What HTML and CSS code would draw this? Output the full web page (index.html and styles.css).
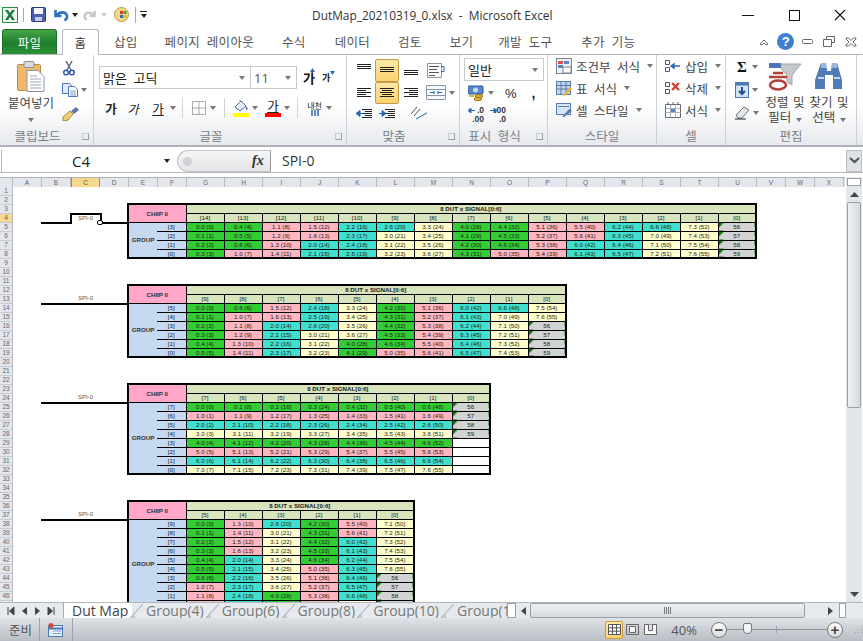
FILE: index.html
```html
<!DOCTYPE html>
<html lang="ko">
<head>
    <meta charset="UTF-8">
    <meta name="viewport" content="width=device-width, initial-scale=1.0">
    <title>DutMap_20210319_0.xlsx - Microsoft Excel</title>
    <link rel="stylesheet" href="styles.css">
</head>
<body>
<div class="app">

    <header class="titlebar">
        <div class="qat">
            <svg class="x-logo" width="16" height="16" viewBox="0 0 16 16"><rect x="0.5" y="0.5" width="15" height="15" fill="#eef6ee" stroke="#2c8a4a"/><path d="M3 3h3l2 3 2-3h3l-3.500 5 3.500 5h-3l-2-3-2 3H3l3.500-5z" fill="#1f7a3d"/></svg>
            <i class="qat-sep"></i>
            <svg class="q-save" width="15" height="15" viewBox="0 0 15 15"><rect x="0.500" y="0.500" width="14" height="14" rx="1" fill="#4a5fb0" stroke="#2b3a80"/><rect x="3" y="1" width="9" height="6" fill="#f4f6fb"/><rect x="4" y="10" width="7" height="4" fill="#c9cfdf"/></svg>
            <svg class="q-undo" width="16" height="14" viewBox="0 0 16 14"><path d="M1.500 2v6h6M2.500 7.500C5 3.500 12 3 13 8c.4 2-1 3.500-2.500 4.500" fill="none" stroke="#2f74c0" stroke-width="2.600"/></svg>
            <span class="dd dark q-dd1"></span>
            <svg class="q-redo" width="14" height="14" viewBox="0 0 16 14"><path d="M14.500 2v6h-6M13.500 7.500C11 3.500 4 3 3 8c-.4 2 1 3.500 2.500 4.500" fill="none" stroke="#c3c7cc" stroke-width="2.600"/></svg>
            <span class="dd light q-dd2"></span>
            <svg class="q-palette" width="15" height="15" viewBox="0 0 15 15"><circle cx="7.500" cy="7.500" r="7" fill="#f3d982" stroke="#b89a4a"/><rect x="6" y="4" width="3" height="3" fill="#d9382c"/><rect x="9.500" y="4" width="3" height="3" fill="#3d9c3d"/><rect x="6" y="8" width="3" height="3" fill="#3468c0"/><rect x="9.500" y="8" width="3" height="3" fill="#e8b020"/></svg>
            <i class="qat-sep tall"></i>
            <span class="q-custom"><i></i><span class="dd dark"></span></span>
        </div>
        <div class="doc-title">DutMap_20210319_0.xlsx&nbsp; -&nbsp; Microsoft Excel</div>
        <div class="win-btns">
            <svg width="12" height="12" viewBox="0 0 12 12"><path d="M0 6.500h12" stroke="#111"/></svg>
            <svg width="12" height="12" viewBox="0 0 12 12"><rect x="1.500" y="1.500" width="10" height="10" fill="none" stroke="#111"/></svg>
            <svg width="12" height="12" viewBox="0 0 12 12"><path d="M1 1l10 10M11 1L1 11" stroke="#111" stroke-width="1.100"/></svg>
        </div>
    </header>

    <nav class="tabs">
        <a class="tab-file">파일</a>
        <a class="tab-home">홈</a>
        <a class="t-insert">삽입</a>
        <a class="t-page">페이지 레이아웃</a>
        <a class="t-formula">수식</a>
        <a class="t-data">데이터</a>
        <a class="t-review">검토</a>
        <a class="t-view">보기</a>
        <a class="t-dev">개발 도구</a>
        <a class="t-addin">추가 기능</a>
        <div class="help-btns">
            <svg width="10" height="8" viewBox="0 0 10 8"><path d="M1 6l4-4 4 4-2 1-2-2-2 2z" fill="#fff" stroke="#666"/></svg>
            <span class="help">?</span>
            <svg width="11" height="6" viewBox="0 0 11 6"><rect x="0.500" y="0.500" width="10" height="4" rx="1" fill="#fff" stroke="#666"/></svg>
            <svg width="12" height="11" viewBox="0 0 12 11"><path d="M3.500 3V.5h8v6H9M.5 3.500h8v7h-8z" fill="#fff" stroke="#666"/></svg>
            <svg width="12" height="10" viewBox="0 0 12 10"><path d="M1 1h2.500L6 3.500 8.500 1H11v1L8 5l3 3v1H8.500L6 6.500 3.500 9H1V8l3-3-3-3z" fill="#fff" stroke="#666"/></svg>
        </div>
    </nav>

    <section class="ribbon">

        <div class="group g-clip">
            <div class="group-body clip-body">
                <div class="paste">
                    <svg width="28" height="31" viewBox="0 0 28 31"><rect x="0.500" y="3.500" width="23" height="26" rx="1.500" fill="#eeb96c" stroke="#b98a46"/><rect x="7" y="0.500" width="10" height="6" rx="1" fill="#d8dade" stroke="#8d8f94"/><path d="M10 9.500h11l6 6v15H10z" fill="#fff" stroke="#8c96a6"/><path d="M13 15h7M13 18h11M13 21h11M13 24h11M13 27h11" stroke="#9aa6b6"/></svg>
                    <span class="paste-label">붙여넣기</span>
                    <span class="dd"></span>
                </div>
                <div class="clip-tools">
                    <svg class="i-cut" width="12" height="15" viewBox="0 0 12 15"><path d="M3 0l5 9M9 0L4 9" stroke="#5a6a80" stroke-width="1.500"/><circle cx="3" cy="11.500" r="2.300" fill="none" stroke="#2a5aa8" stroke-width="1.500"/><circle cx="9" cy="11.500" r="2.300" fill="none" stroke="#2a5aa8" stroke-width="1.500"/></svg>
                    <span class="i-copy"><svg width="16" height="14" viewBox="0 0 16 14"><path d="M.5.5h7l2 2v8H.5z" fill="#e2ecf8" stroke="#4a78b8"/><path d="M6.500 3.500h6l3 3v7h-9z" fill="#fff" stroke="#4a78b8"/><path d="M8 8h6M8 10h6M8 12h6" stroke="#7a9ccc"/></svg><span class="dd"></span></span>
                    <svg class="i-brush" width="17" height="14" viewBox="0 0 17 14"><path d="M1 10l7-6 3 3-5 6-5 1z" fill="#f0d070" stroke="#a88a3a"/><path d="M9 4l5-4 3 3-5 4z" fill="#5a7ab0"/></svg>
                </div>
            </div>
            <div class="group-label launched">클립보드<i class="launch"></i></div>
        </div>

        <div class="group g-font">
            <div class="group-body">
                <div class="font-row1">
                    <div class="combo c-font"><span>맑은 고딕</span><span class="dd"></span></div>
                    <div class="combo c-size"><span class="size-val">11</span><span class="dd"></span></div>
                    <span class="grow">가<svg width="5" height="4" viewBox="0 0 5 4"><path d="M0 4l2.500-4L5 4z" fill="#2a66b8"/></svg></span>
                    <span class="shrink">가<svg width="5" height="4" viewBox="0 0 5 4"><path d="M0 0l2.500 4L5 0z" fill="#2a66b8"/></svg></span>
                </div>
                <div class="font-row2">
                    <span class="fmt f-b">가</span>
                    <span class="fmt f-i">가</span>
                    <span class="fmt f-u">가</span>
                    <span class="dd d1"></span>
                    <i class="vsep s1"></i>
                    <svg class="i-border" width="14" height="14" viewBox="0 0 14 14"><path d="M.5.5h13v13H.5zM7 .5v13M.5 7h13" fill="none" stroke="#666" stroke-dasharray="1 1"/></svg>
                    <span class="dd d2"></span>
                    <i class="vsep s2"></i>
                    <span class="i-fill"><svg width="16" height="12" viewBox="0 0 16 12"><path d="M2 7l6-6 5 5-6 5z" fill="#e8eef8" stroke="#4c6ea8"/><path d="M13 6c2 2 2 4 1 4s-2-2-1-4z" fill="#4c6ea8"/><path d="M7 1V0" stroke="#4c6ea8"/></svg><b class="bar yellow"></b></span>
                    <span class="dd d3"></span>
                    <span class="i-color">가<b class="bar red"></b></span>
                    <span class="dd d3"></span>
                    <i class="vsep s3"></i>
                    <span class="i-phon">내천<svg width="12" height="6" viewBox="0 0 12 6"><path d="M3 0v6M6 0v6M9 0v6" stroke="#2a66b8" stroke-width="1.500"/></svg></span>
                    <span class="dd d4"></span>
                </div>
            </div>
            <div class="group-label launched">글꼴<i class="launch"></i></div>
        </div>

        <div class="group g-align">
            <div class="group-body align-grid">
                <span class="atool"><svg class="lines" width="14" height="14" viewBox="0 0 14 14"><path d="M0 1.500h14M0 3.500h14M0 5.500h14"/></svg></span>
                <span class="atool on"><svg class="lines" width="14" height="14" viewBox="0 0 14 14"><path d="M0 4.500h14M0 6.500h14M0 8.500h14"/></svg></span>
                <span class="atool"><svg class="lines" width="14" height="14" viewBox="0 0 14 14"><path d="M0 7.500h14M0 9.500h14M0 11.500h14"/></svg></span>
                <span class="awide"><svg width="20" height="15" viewBox="0 0 20 15"><path d="M1.500.5h14v14h-14z" fill="#fff" stroke="#8a97a8"/><path d="M3 3.500h10M3 6.500h8M3 9.500h10M3 12.500h6" stroke="#555"/><path d="M15 3.500h3v5h-3" fill="none" stroke="#2a66b8"/></svg></span>
                <span class="atool"><svg class="lines" width="14" height="14" viewBox="0 0 14 14"><path d="M0 2.500h14M0 4.500h9M0 6.500h14M0 8.500h9M0 10.500h14"/></svg></span>
                <span class="atool on"><svg class="lines" width="14" height="14" viewBox="0 0 14 14"><path d="M0 2.500h14M2 4.500h10M0 6.500h14M2 8.500h10M0 10.500h14"/></svg></span>
                <span class="atool"><svg class="lines" width="14" height="14" viewBox="0 0 14 14"><path d="M0 2.500h14M5 4.500h9M0 6.500h14M5 8.500h9M0 10.500h14"/></svg></span>
                <span class="awide"><svg width="20" height="15" viewBox="0 0 20 15"><path d="M.5.5h19v14H.5z" fill="#f4f7fb" stroke="#8a97a8"/><path d="M.5 4.500h19M.5 10.500h19" stroke="#8a97a8"/><path d="M4 7.500h4M12 7.500h4M8 6v3M12 6v3" stroke="#2a66b8"/></svg><span class="dd"></span></span>
                <span class="atool"><svg class="lines" width="16" height="14" viewBox="0 0 16 14"><path d="M6 1.500h10M9 3.500h7M6 5.500h10M9 7.500h7M6 9.500h10"/><path class="blue" d="M0 5.500l4-3v6zM3 5.500h4"/></svg></span>
                <span class="atool"><svg class="lines" width="16" height="14" viewBox="0 0 16 14"><path d="M6 1.500h10M9 3.500h7M6 5.500h10M9 7.500h7M6 9.500h10"/><path class="blue" d="M7 5.500l-4-3v6zM0 5.500h4"/></svg></span>
                <span class="aorient"><svg width="18" height="16" viewBox="0 0 18 16"><path d="M1 9l6-7M4 11l6-7" stroke="#555"/><path d="M6 14l11-6" stroke="#2a66b8"/></svg></span>
            </div>
            <div class="group-label launched">맞춤<i class="launch"></i></div>
        </div>

        <div class="group g-num">
            <div class="group-body">
                <div class="combo c-num"><span>일반</span><span class="dd"></span></div>
                <div class="num-row">
                    <svg class="i-money" width="16" height="16" viewBox="0 0 16 16"><rect x="0" y="1" width="15" height="8" rx="1" fill="#5a86c8" stroke="#2c5a9c"/><circle cx="7.500" cy="5" r="2.500" fill="#c8d8f0"/><ellipse cx="11" cy="11" rx="4" ry="1.500" fill="#e8b830" stroke="#9a7418"/><ellipse cx="10" cy="14" rx="4" ry="1.500" fill="#e8b830" stroke="#9a7418"/><path d="M1 11h5" stroke="#e8b830" stroke-width="2"/></svg>
                    <span class="dd"></span>
                    <span class="pct">%</span>
                    <span class="comma">,</span>
                </div>
                <div class="dec-row">
                    <span class="dec">.0<br>.00<svg width="7" height="5" viewBox="0 0 7 5"><path d="M0 2.500L3 0v5zM3 2.500h4" fill="#2a66b8" stroke="#2a66b8"/></svg></span>
                    <span class="dec">.00<br>.0<svg width="7" height="5" viewBox="0 0 7 5"><path d="M7 2.500L4 0v5zM0 2.500h4" fill="#2a66b8" stroke="#2a66b8"/></svg></span>
                </div>
            </div>
            <div class="group-label launched">표시 형식<i class="launch"></i></div>
        </div>

        <div class="group g-style">
            <div class="group-body stack">
                <div class="cmd"><svg width="16" height="16" viewBox="0 0 16 16"><rect x="0.500" y="0.500" width="15" height="15" fill="#eef1f6" stroke="#7a8696"/><path d="M2 3h5v3H2z" fill="#d9534a"/><path d="M8 3h5v3H8z" fill="#5a86c8"/><path d="M2 7h5v3H2z" fill="#5a86c8"/><rect x="7" y="9" width="8" height="6" fill="#fff" stroke="#7a8696"/></svg><span>조건부 서식</span><span class="dd"></span></div>
                <div class="cmd"><svg width="16" height="16" viewBox="0 0 16 16"><rect x="0.500" y="1.500" width="14" height="13" fill="#c4d4ec" stroke="#5a7ab0"/><path d="M.5 5.500h14M.5 9h14M5 1.500v13M10 1.500v13" stroke="#5a7ab0"/><path d="M7 15l7-8 2 2-7 7z" fill="#e8b830"/></svg><span>표 서식</span><span class="dd"></span></div>
                <div class="cmd"><svg width="16" height="16" viewBox="0 0 16 16"><rect x="0.500" y="1.500" width="14" height="11" fill="#d8e4f4" stroke="#5a7ab0"/><path d="M2 4.500h11" stroke="#5a7ab0"/><path d="M6 15l7-8 3 2-8 6z" fill="#5a7ab0"/></svg><span>셀 스타일</span><span class="dd"></span></div>
            </div>
            <div class="group-label">스타일</div>
        </div>

        <div class="group g-cells">
            <div class="group-body stack">
                <div class="cmd"><svg width="16" height="16" viewBox="0 0 16 16"><path d="M.5 2.500h4v4h-4zM.5 9.500h4v4h-4z" fill="#fff" stroke="#556"/><path d="M6 8l3-2v4zM9 8h6" fill="#2a66b8" stroke="#2a66b8" stroke-width="1.500"/></svg><span>삽입</span><span class="dd"></span></div>
                <div class="cmd"><svg width="16" height="16" viewBox="0 0 16 16"><path d="M.5 2.500h4v4h-4zM.5 9.500h4v4h-4z" fill="#fff" stroke="#556"/><path d="M7 3l7 7M14 3l-7 7" stroke="#d9382c" stroke-width="2.200"/></svg><span>삭제</span><span class="dd"></span></div>
                <div class="cmd"><svg width="16" height="16" viewBox="0 0 16 16"><path d="M.5 2.500h15v13H.5z" fill="#fff" stroke="#667"/><path d="M.5 6.500h15M.5 10.500h15M5.500 2.500v13M10.500 2.500v13" stroke="#a8b4c4"/><rect x="6" y="7" width="4" height="3" fill="#5a86c8"/><path d="M3 0v3M8 0v3M13 0v3" stroke="#667"/></svg><span>서식</span><span class="dd"></span></div>
            </div>
            <div class="group-label">셀</div>
        </div>

        <div class="group g-edit">
            <div class="group-body edit-body">
                <div class="edit-small">
                    <div class="etool"><span class="sigma">Σ</span><span class="dd"></span></div>
                    <div class="etool"><svg width="14" height="16" viewBox="0 0 14 16"><rect x="0.500" y="0.500" width="13" height="15" fill="#d4e2f4" stroke="#4a78b8"/><path d="M.5.5h13v3H.5z" fill="#4a78b8"/><path d="M7 5v6M4 9l3 3 3-3" fill="none" stroke="#1f4f98" stroke-width="2"/></svg><span class="dd"></span></div>
                    <div class="etool"><svg width="15" height="14" viewBox="0 0 15 14"><path d="M1 9l8-8 5 3-7 8H3z" fill="#e4e6ea" stroke="#70767e"/><path d="M0 13h11" stroke="#222"/></svg><span class="dd"></span></div>
                </div>
                <div class="big-cmd b-sort">
                    <svg width="34" height="31" viewBox="0 0 34 31"><path d="M9 3h24l-9 11v10l-5-3v-7z" fill="#c4c7cc" stroke="#a0a4aa"/><path d="M1 2h12v5H1z" fill="#4a78b8"/><path d="M1 16h18M5 12h10" stroke="#b04038" stroke-width="2.500"/><ellipse cx="10" cy="24" rx="8" ry="4.500" fill="none" stroke="#b04038" stroke-width="2.500"/></svg>
                    <span>정렬 및</span>
                    <span>필터 <span class="dd"></span></span>
                </div>
                <div class="big-cmd b-find">
                    <svg width="28" height="31" viewBox="0 0 28 31"><path d="M6 2h5l1 8h4l1-8h5l5 17v9H18V14h-8v14H0v-9z" fill="#4f7cb8"/><path d="M3 17h6M19 17h6" stroke="#c8d8f0" stroke-width="2"/><rect x="6" y="2" width="5" height="5" fill="#9ab8dc"/><rect x="17" y="2" width="5" height="5" fill="#9ab8dc"/></svg>
                    <span>찾기 및</span>
                    <span>선택 <span class="dd"></span></span>
                </div>
            </div>
            <div class="group-label">편집</div>
        </div>
    </section>

    <div class="formula">
        <div class="namebox"><span class="name-val">C4</span><span class="dd dark"></span></div>
        <div class="fx-wrap"><i class="fx-dot"></i><span class="fx">fx</span></div>
        <div class="formula-text">SPI-0</div>
        <div class="expand"><svg width="11" height="8" viewBox="0 0 11 8"><path d="M1 1l4.500 4L10 1" fill="none" stroke="#555" stroke-width="2.200"/></svg></div>
    </div>
    <div class="formula-gap"></div>

    <div class="sheet">
        <div class="sheet-main">
            <div class="colheads">
                <i class="corner"></i>
                <span class="ch">A</span><span class="ch">B</span><span class="ch cur">C</span><span class="ch">D</span><span class="ch">E</span><span class="ch">F</span>
                <span class="ch w">G</span><span class="ch w">H</span><span class="ch w">I</span><span class="ch w">J</span><span class="ch w">K</span><span class="ch w">L</span><span class="ch w">M</span><span class="ch w">N</span><span class="ch w">O</span><span class="ch w">P</span><span class="ch w">Q</span><span class="ch w">R</span><span class="ch w">S</span><span class="ch w">T</span><span class="ch w">U</span>
                <span class="ch">V</span><span class="ch">W</span><span class="ch">X</span>
            </div>
            <div class="sheet-body">
                <div class="rowheads">
                    <span>1</span><span>2</span><span>3</span><span class="cur">4</span><span>5</span><span>6</span><span>7</span><span>8</span><span>9</span><span>10</span>
                    <span>11</span><span>12</span><span>13</span><span>14</span><span>15</span><span>16</span><span>17</span><span>18</span><span>19</span><span>20</span>
                    <span>21</span><span>22</span><span>23</span><span>24</span><span>25</span><span>26</span><span>27</span><span>28</span><span>29</span><span>30</span>
                    <span>31</span><span>32</span><span>33</span><span>34</span><span>35</span><span>36</span><span>37</span><span>38</span><span>39</span><span>40</span>
                    <span>41</span><span>42</span><span>43</span><span>44</span><span>45</span><span>46</span>
                </div>
                <div class="cells">

                    <div class="lead sel r4">
                        <i class="line"></i>
                        <span class="cur-cell">SPI-0<b class="handle"></b></span>
                        <i class="line"></i>
                    </div>
                    <table class="map map-a">
                        <colgroup><col class="side"><col class="side"><col span="15"></colgroup>
                        <tr><td class="chip" colspan="2" rowspan="2">CHIIP 0</td><td class="title" colspan="15">8 DUT x SIGNAL[0:6]</td></tr>
                        <tr class="heads"><td>[14]</td><td>[13]</td><td>[12]</td><td>[11]</td><td>[10]</td><td>[9]</td><td>[8]</td><td>[7]</td><td>[6]</td><td>[5]</td><td>[4]</td><td>[3]</td><td>[2]</td><td>[1]</td><td>[0]</td></tr>
                        <tr><td class="grp" rowspan="4">GROUP</td><td class="lab">[3]</td><td class="g">0.0 (0)</td><td class="g">0.4 (4)</td><td class="p">1.1 (8)</td><td class="p">1.5 (12)</td><td class="t">2.2 (16)</td><td class="t">2.6 (20)</td><td class="y">3.3 (24)</td><td class="g">4.0 (28)</td><td class="g">4.4 (32)</td><td class="p">5.1 (36)</td><td class="p">5.5 (40)</td><td class="t">6.2 (44)</td><td class="t">6.6 (48)</td><td class="y">7.3 (52)</td><td class="n">56</td></tr>
                        <tr><td class="lab">[2]</td><td class="g">0.1 (1)</td><td class="g">0.5 (5)</td><td class="p">1.2 (9)</td><td class="p">1.6 (13)</td><td class="t">2.3 (17)</td><td class="y">3.0 (21)</td><td class="y">3.4 (25)</td><td class="g">4.1 (29)</td><td class="g">4.5 (33)</td><td class="p">5.2 (37)</td><td class="p">5.6 (41)</td><td class="t">6.3 (45)</td><td class="y">7.0 (49)</td><td class="y">7.4 (53)</td><td class="n">57</td></tr>
                        <tr><td class="lab">[1]</td><td class="g">0.2 (2)</td><td class="g">0.6 (6)</td><td class="p">1.3 (10)</td><td class="t">2.0 (14)</td><td class="t">2.4 (18)</td><td class="y">3.1 (22)</td><td class="y">3.5 (26)</td><td class="g">4.2 (30)</td><td class="g">4.6 (34)</td><td class="p">5.3 (38)</td><td class="t">6.0 (42)</td><td class="t">6.4 (46)</td><td class="y">7.1 (50)</td><td class="y">7.5 (54)</td><td class="n">58</td></tr>
                        <tr><td class="lab">[0]</td><td class="g">0.3 (3)</td><td class="p">1.0 (7)</td><td class="p">1.4 (11)</td><td class="t">2.1 (15)</td><td class="t">2.5 (19)</td><td class="y">3.2 (23)</td><td class="y">3.6 (27)</td><td class="g">4.3 (31)</td><td class="p">5.0 (35)</td><td class="p">5.4 (39)</td><td class="t">6.1 (43)</td><td class="t">6.5 (47)</td><td class="y">7.2 (51)</td><td class="y">7.6 (55)</td><td class="n">59</td></tr>
                    </table>

                    <div class="lead r13"><span class="lead-text">SPI-0</span></div>
                    <table class="map map-b">
                        <colgroup><col class="side"><col class="side"><col span="10"></colgroup>
                        <tr><td class="chip" colspan="2" rowspan="2">CHIIP 0</td><td class="title" colspan="10">8 DUT x SIGNAL[0:6]</td></tr>
                        <tr class="heads"><td>[9]</td><td>[8]</td><td>[7]</td><td>[6]</td><td>[5]</td><td>[4]</td><td>[3]</td><td>[2]</td><td>[1]</td><td>[0]</td></tr>
                        <tr><td class="grp" rowspan="6">GROUP</td><td class="lab">[5]</td><td class="g">0.0 (0)</td><td class="g">0.6 (6)</td><td class="p">1.5 (12)</td><td class="t">2.4 (18)</td><td class="y">3.3 (24)</td><td class="g">4.2 (30)</td><td class="p">5.1 (36)</td><td class="t">6.0 (42)</td><td class="t">6.6 (48)</td><td class="y">7.5 (54)</td></tr>
                        <tr><td class="lab">[4]</td><td class="g">0.1 (1)</td><td class="p">1.0 (7)</td><td class="p">1.6 (13)</td><td class="t">2.5 (19)</td><td class="y">3.4 (25)</td><td class="g">4.3 (31)</td><td class="p">5.2 (37)</td><td class="t">6.1 (43)</td><td class="y">7.0 (49)</td><td class="y">7.6 (55)</td></tr>
                        <tr><td class="lab">[3]</td><td class="g">0.2 (2)</td><td class="p">1.1 (8)</td><td class="t">2.0 (14)</td><td class="t">2.6 (20)</td><td class="y">3.5 (26)</td><td class="g">4.4 (32)</td><td class="p">5.3 (38)</td><td class="t">6.2 (44)</td><td class="y">7.1 (50)</td><td class="n">56</td></tr>
                        <tr><td class="lab">[2]</td><td class="g">0.3 (3)</td><td class="p">1.2 (9)</td><td class="t">2.1 (15)</td><td class="y">3.0 (21)</td><td class="y">3.6 (27)</td><td class="g">4.5 (33)</td><td class="p">5.4 (39)</td><td class="t">6.3 (45)</td><td class="y">7.2 (51)</td><td class="n">57</td></tr>
                        <tr><td class="lab">[1]</td><td class="g">0.4 (4)</td><td class="p">1.3 (10)</td><td class="t">2.2 (16)</td><td class="y">3.1 (22)</td><td class="g">4.0 (28)</td><td class="g">4.6 (34)</td><td class="p">5.5 (40)</td><td class="t">6.4 (46)</td><td class="y">7.3 (52)</td><td class="n">58</td></tr>
                        <tr><td class="lab">[0]</td><td class="g">0.5 (5)</td><td class="p">1.4 (11)</td><td class="t">2.3 (17)</td><td class="y">3.2 (23)</td><td class="g">4.1 (29)</td><td class="p">5.0 (35)</td><td class="p">5.6 (41)</td><td class="t">6.5 (47)</td><td class="y">7.4 (53)</td><td class="n">59</td></tr>
                    </table>

                    <div class="lead r24"><span class="lead-text">SPI-0</span></div>
                    <table class="map map-c">
                        <colgroup><col class="side"><col class="side"><col span="8"></colgroup>
                        <tr><td class="chip" colspan="2" rowspan="2">CHIIP 0</td><td class="title" colspan="8">8 DUT x SIGNAL[0:6]</td></tr>
                        <tr class="heads"><td>[7]</td><td>[6]</td><td>[5]</td><td>[4]</td><td>[3]</td><td>[2]</td><td>[1]</td><td>[0]</td></tr>
                        <tr><td class="grp" rowspan="8">GROUP</td><td class="lab">[7]</td><td class="g">0.0 (0)</td><td class="g">0.1 (8)</td><td class="g">0.2 (16)</td><td class="g">0.3 (24)</td><td class="g">0.4 (32)</td><td class="g">0.5 (40)</td><td class="g">0.6 (48)</td><td class="n">56</td></tr>
                        <tr><td class="lab">[6]</td><td class="p">1.0 (1)</td><td class="p">1.1 (9)</td><td class="p">1.2 (17)</td><td class="p">1.3 (25)</td><td class="p">1.4 (33)</td><td class="p">1.5 (41)</td><td class="p">1.6 (49)</td><td class="n">57</td></tr>
                        <tr><td class="lab">[5]</td><td class="t">2.0 (2)</td><td class="t">2.1 (10)</td><td class="t">2.2 (18)</td><td class="t">2.3 (26)</td><td class="t">2.4 (34)</td><td class="t">2.5 (42)</td><td class="t">2.6 (50)</td><td class="n">58</td></tr>
                        <tr><td class="lab">[4]</td><td class="y">3.0 (3)</td><td class="y">3.1 (11)</td><td class="y">3.2 (19)</td><td class="y">3.3 (27)</td><td class="y">3.4 (35)</td><td class="y">3.5 (43)</td><td class="y">3.6 (51)</td><td class="n">59</td></tr>
                        <tr><td class="lab">[3]</td><td class="g">4.0 (4)</td><td class="g">4.1 (12)</td><td class="g">4.2 (20)</td><td class="g">4.3 (28)</td><td class="g">4.4 (36)</td><td class="g">4.5 (44)</td><td class="g">4.6 (52)</td><td></td></tr>
                        <tr><td class="lab">[2]</td><td class="p">5.0 (5)</td><td class="p">5.1 (13)</td><td class="p">5.2 (21)</td><td class="p">5.3 (29)</td><td class="p">5.4 (37)</td><td class="p">5.5 (45)</td><td class="p">5.6 (53)</td><td></td></tr>
                        <tr><td class="lab">[1]</td><td class="t">6.0 (6)</td><td class="t">6.1 (14)</td><td class="t">6.2 (22)</td><td class="t">6.3 (30)</td><td class="t">6.4 (38)</td><td class="t">6.5 (46)</td><td class="t">6.6 (54)</td><td></td></tr>
                        <tr><td class="lab">[0]</td><td class="y">7.0 (7)</td><td class="y">7.1 (15)</td><td class="y">7.2 (23)</td><td class="y">7.3 (31)</td><td class="y">7.4 (39)</td><td class="y">7.5 (47)</td><td class="y">7.6 (55)</td><td></td></tr>
                    </table>

                    <div class="lead r37"><span class="lead-text">SPI-0</span></div>
                    <table class="map map-d">
                        <colgroup><col class="side"><col class="side"><col span="6"></colgroup>
                        <tr><td class="chip" colspan="2" rowspan="2">CHIIP 0</td><td class="title" colspan="6">8 DUT x SIGNAL[0:6]</td></tr>
                        <tr class="heads"><td>[5]</td><td>[4]</td><td>[3]</td><td>[2]</td><td>[1]</td><td>[0]</td></tr>
                        <tr><td class="grp" rowspan="10">GROUP</td><td class="lab">[9]</td><td class="g">0.0 (0)</td><td class="p">1.3 (10)</td><td class="t">2.6 (20)</td><td class="g">4.2 (30)</td><td class="p">5.5 (40)</td><td class="y">7.1 (50)</td></tr>
                        <tr><td class="lab">[8]</td><td class="g">0.1 (1)</td><td class="p">1.4 (11)</td><td class="y">3.0 (21)</td><td class="g">4.3 (31)</td><td class="p">5.6 (41)</td><td class="y">7.2 (51)</td></tr>
                        <tr><td class="lab">[7]</td><td class="g">0.2 (2)</td><td class="p">1.5 (12)</td><td class="y">3.1 (22)</td><td class="g">4.4 (32)</td><td class="t">6.0 (42)</td><td class="y">7.3 (52)</td></tr>
                        <tr><td class="lab">[6]</td><td class="g">0.3 (3)</td><td class="p">1.6 (13)</td><td class="y">3.2 (23)</td><td class="g">4.5 (33)</td><td class="t">6.1 (43)</td><td class="y">7.4 (53)</td></tr>
                        <tr><td class="lab">[5]</td><td class="g">0.4 (4)</td><td class="t">2.0 (14)</td><td class="y">3.3 (24)</td><td class="g">4.6 (34)</td><td class="t">6.2 (44)</td><td class="y">7.5 (54)</td></tr>
                        <tr><td class="lab">[4]</td><td class="g">0.5 (5)</td><td class="t">2.1 (15)</td><td class="y">3.4 (25)</td><td class="p">5.0 (35)</td><td class="t">6.3 (45)</td><td class="y">7.6 (55)</td></tr>
                        <tr><td class="lab">[3]</td><td class="g">0.6 (6)</td><td class="t">2.2 (16)</td><td class="y">3.5 (26)</td><td class="p">5.1 (36)</td><td class="t">6.4 (46)</td><td class="n">56</td></tr>
                        <tr><td class="lab">[2]</td><td class="p">1.0 (7)</td><td class="t">2.3 (17)</td><td class="y">3.6 (27)</td><td class="p">5.2 (37)</td><td class="t">6.5 (47)</td><td class="n">57</td></tr>
                        <tr><td class="lab">[1]</td><td class="p">1.1 (8)</td><td class="t">2.4 (18)</td><td class="g">4.0 (28)</td><td class="p">5.3 (38)</td><td class="t">6.6 (48)</td><td class="n">58</td></tr>
                        <tr><td class="lab"></td><td class="p"></td><td class="t"></td><td class="g"></td><td class="p"></td><td class="y"></td><td class="n"></td></tr>
                    </table>

                </div>
            </div>
        </div>
        <div class="vscroll">
            <i class="v-split"></i>
            <span class="v-btn"><svg width="9" height="5" viewBox="0 0 9 5"><path d="M0 5l4.500-5L9 5z" fill="#444"/></svg></span>
            <i class="v-thumb"></i>
            <i class="v-fill"></i>
            <span class="v-btn"><svg width="9" height="5" viewBox="0 0 9 5"><path d="M0 0l4.500 5L9 0z" fill="#444"/></svg></span>
        </div>
    </div>

    <div class="sheetbar">
        <div class="nav-btns">
            <svg width="8" height="8" viewBox="0 0 8 8"><path d="M1 0v8M7 0L2.500 4 7 8z" fill="#444" stroke="#444"/></svg>
            <svg width="6" height="8" viewBox="0 0 6 8"><path d="M5 0L0 4l5 4z" fill="#444"/></svg>
            <svg width="6" height="8" viewBox="0 0 6 8"><path d="M1 0l5 4-5 4z" fill="#444"/></svg>
            <svg width="8" height="8" viewBox="0 0 8 8"><path d="M7 0v8M1 0l4.500 4L1 8z" fill="#444" stroke="#444"/></svg>
        </div>
        <div class="sheet-tabs">
            <span class="st on">Dut Map</span>
            <svg class="slant" width="14" height="16" viewBox="0 0 14 16"><path d="M0 15L13 1" stroke="#9aa0a8" fill="none"/><path d="M1 15l4-4v4z" fill="#c2c6cc"/></svg>
            <span class="st">Group(4)</span>
            <svg class="slant" width="14" height="16" viewBox="0 0 14 16"><path d="M0 15L13 1" stroke="#9aa0a8" fill="none"/><path d="M1 15l4-4v4z" fill="#c2c6cc"/></svg>
            <span class="st">Group(6)</span>
            <svg class="slant" width="14" height="16" viewBox="0 0 14 16"><path d="M0 15L13 1" stroke="#9aa0a8" fill="none"/><path d="M1 15l4-4v4z" fill="#c2c6cc"/></svg>
            <span class="st">Group(8)</span>
            <svg class="slant" width="14" height="16" viewBox="0 0 14 16"><path d="M0 15L13 1" stroke="#9aa0a8" fill="none"/><path d="M1 15l4-4v4z" fill="#c2c6cc"/></svg>
            <span class="st">Group(10)</span>
            <svg class="slant" width="14" height="16" viewBox="0 0 14 16"><path d="M0 15L13 1" stroke="#9aa0a8" fill="none"/><path d="M1 15l4-4v4z" fill="#c2c6cc"/></svg>
            <span class="st">Group(1</span>
        </div>
        <i class="h-split"></i>
        <div class="hscroll">
            <svg width="6" height="8" viewBox="0 0 6 8"><path d="M5 0L0 4l5 4z" fill="#444"/></svg>
            <div class="h-thumb"><svg width="7" height="7" viewBox="0 0 7 7"><path d="M.5 0v7M2.500 0v7M4.500 0v7M6.500 0v7" stroke="#777"/></svg></div>
            <svg width="6" height="8" viewBox="0 0 6 8"><path d="M1 0l5 4-5 4z" fill="#444"/></svg>
        </div>
        <i class="h-split right"></i>
    </div>

    <footer class="status">
        <span class="ready">준비</span>
        <i class="st-sep"></i>
        <svg class="macro" width="15" height="14" viewBox="0 0 15 14"><rect x="0.500" y="2.500" width="14" height="11" fill="#e8f0fa" stroke="#4a78b8"/><path d="M.5 5.500h14" stroke="#4a78b8" stroke-width="2"/><path d="M5 8h8M5 10.500h8" stroke="#7a9ccc"/><circle cx="3" cy="2.500" r="2.500" fill="#d9482c"/></svg>
        <i class="st-sep"></i>
        <div class="st-right">
            <span class="view on"><svg width="13" height="11" viewBox="0 0 13 11"><path d="M.5.5h12v10H.5zM.5 3.800h12M.5 7.200h12M4.500.5v10M8.500.5v10" fill="#fff" stroke="#555"/></svg></span>
            <span class="view"><svg width="13" height="11" viewBox="0 0 13 11"><path d="M.5.5h12v10H.5z" fill="none" stroke="#666"/><path d="M3.500 2.500h6v6h-6z" fill="#f4f4f4" stroke="#666"/></svg></span>
            <span class="view"><svg width="13" height="11" viewBox="0 0 13 11"><path d="M.5.5h12v10H.5z" fill="#f8f8f8" stroke="#666"/><path d="M4.500.5v6h4v-6" fill="#dde" stroke="#666"/></svg></span>
            <span class="zoom-val">40%</span>
            <span class="round">−</span>
            <div class="slider">
                <i class="slider-thumb"></i>
                <i class="slider-tick"></i>
            </div>
            <span class="round">+</span>
            <svg class="grip" width="9" height="9" viewBox="0 0 9 9"><path d="M7 1h1v1H7zM4 4h1v1H4zM7 4h1v1H7zM1 7h1v1H1zM4 7h1v1H4zM7 7h1v1H7z" fill="#9aa0a8"/></svg>
        </div>
    </footer>

</div>
</body>
</html>
```

FILE: styles.css
```css
*{
    box-sizing: border-box;
}
html,body{
    margin: 0;
    padding: 0;
    background: #fff;
}
body{
    font-family: "Noto Sans CJK KR", "Noto Sans", sans-serif;
    color: #444;
    overflow: hidden;
}
.app{
    width: 863px;
    height: 641px;
    display: flex;
    flex-direction: column;
    overflow: hidden;
}
i{
    display: block;
}
.dd{
    display: inline-block;
    width: 0;
    height: 0;
    border-left: 3.5px solid transparent;
    border-right: 3.5px solid transparent;
    border-top: 4px solid #777;
    flex: none;
}
.dd.dark{
    border-top-color: #222;
}
.dd.light{
    border-top-color: #c8ccd0;
}

/* title bar */
.titlebar{
    height: 29px;
    display: flex;
    align-items: center;
    background: #fff;
    flex: none;
}
.qat{
    width: 312px;
    display: flex;
    align-items: center;
    padding-left: 2px;
}
.qat-sep{
    width: 1px;
    height: 14px;
    background: #aaa;
    margin-left: 5px;
}
.q-save{
    margin-left: 7px;
}
.q-undo{
    margin-left: 8px;
}
.q-dd1{
    margin-left: 2px;
}
.q-redo{
    margin-left: 4px;
}
.q-dd2{
    margin-left: 5px;
}
.q-palette{
    margin-left: 7px;
}
.qat-sep.tall{
    height: 16px;
    margin-left: 6px;
}
.q-custom{
    margin-left: 4px;
    display: flex;
    flex-direction: column;
    gap: 2px;
    align-items: center;
}
.q-custom i{
    width: 7px;
    height: 1px;
    background: #222;
}
.doc-title{
    width: 420px;
    font-family: "Open Sans", "Noto Sans CJK KR", sans-serif;
    font-size: 11.900px;
    color: #333;
    white-space: nowrap;
}
.win-btns{
    flex: 1;
    display: flex;
    gap: 34px;
    padding-left: 10px;
}

/* ribbon tabs */
.tabs{
    height: 26px;
    display: flex;
    font-size: 12.500px;
    word-spacing: 3px;
    letter-spacing: .3px;
    color: #555;
    border-bottom: 1px solid #b4b8be;
    flex: none;
    white-space: nowrap;
}
.tabs a{
    display: flex;
    align-items: center;
    height: 25px;
}
.tab-file{
    margin-left: 2px;
    width: 55px;
    justify-content: center;
    color: #fff;
    background: linear-gradient(to bottom, #47a447, #1d7f2c 55%, #2c9139);
    border: 1px solid #1c6f2a;
    border-bottom: 0;
    border-radius: 3px 3px 0 0;
}
.tab-home{
    margin-left: 5px;
    width: 37px;
    height: 26px !important;
    justify-content: center;
    background: #fff;
    border: 1px solid #b4b8be;
    border-bottom: 0;
    border-radius: 3px 3px 0 0;
    position: relative;
    z-index: 1;
    color: #333;
}
.t-insert{
    margin-left: 15px;
}
.t-page{
    margin-left: 27px;
}
.t-formula{
    margin-left: 28px;
}
.t-data{
    margin-left: 29px;
}
.t-review{
    margin-left: 28px;
}
.t-view{
    margin-left: 28px;
}
.t-dev{
    margin-left: 25px;
}
.t-addin{
    margin-left: 29px;
}
.help-btns{
    flex: 1;
    display: flex;
    align-items: center;
    gap: 10px;
    padding-left: 124px;
}
.help{
    width: 17px;
    height: 17px;
    margin: 0 -2px;
    border-radius: 50%;
    background: #3f7fd0;
    color: #fff;
    font: bold 13px "Liberation Sans", sans-serif;
    text-align: center;
    line-height: 17px;
}

/* ribbon */
.ribbon{
    height: 92px;
    display: flex;
    background: linear-gradient(to bottom, #fff 55%, #e6e9ee);
    border-bottom: 2px solid #aeb2b8;
    flex: none;
    font-size: 12.500px;
    word-spacing: 3px;
    color: #444;
}
.group{
    display: flex;
    flex-direction: column;
    border-right: 1px solid #cdd0d5;
    flex: none;
}
.group-body{
    height: 73px;
}
.group-label{
    position: relative;
    height: 17px;
    line-height: 15px;
    text-align: center;
    font-size: 12.500px;
    color: #7a7f86;
}
.group-label.launched{
    padding-right: 18px;
}
.launch{
    position: absolute;
    right: 4px;
    top: 5px;
    width: 7px;
    height: 7px;
    border: 1px solid #9aa0a8;
    border-top-color: #c8ccd0;
    border-left-color: #c8ccd0;
}
.g-clip{
    width: 94px;
}
.g-font{
    width: 253px;
}
.g-align{
    width: 113px;
}
.g-num{
    width: 88px;
}
.g-style{
    width: 109px;
}
.g-cells{
    width: 69px;
}
.g-edit{
    width: 131px;
}

.clip-body{
    display: flex;
}
.paste{
    width: 62px;
    display: flex;
    flex-direction: column;
    align-items: center;
    padding-top: 6px;
}
.paste-label{
    margin-top: 2px;
    line-height: 17px;
    white-space: nowrap;
}
.paste .dd{
    margin-top: 7px;
}
.clip-tools{
    display: flex;
    flex-direction: column;
    align-items: flex-start;
}
.i-cut{
    margin: 6px 0 0 1px;
}
.i-copy{
    margin-top: 7px;
    display: flex;
    align-items: center;
    gap: 3px;
}
.i-brush{
    margin-top: 10px;
}

.combo{
    height: 23px;
    display: flex;
    align-items: center;
    justify-content: space-between;
    border: 1px solid #c6cacf;
    background: #fff;
    padding: 0 5px 0 3px;
    color: #222;
}
.font-row1{
    display: flex;
    align-items: center;
    padding: 11px 0 0 5px;
}
.c-font{
    width: 152px;
    font-size: 13px;
}
.c-size{
    width: 47px;
    margin-left: -1px;
}
.size-val{
    font-family: "Open Sans", sans-serif;
    color: #555;
    font-size: 13px;
}
.grow,.shrink{
    display: flex;
    color: #111;
    font-weight: 700;
}
.grow{
    margin-left: 6px;
    font-size: 13px;
}
.shrink{
    margin-left: 7px;
    font-size: 9px;
    align-items: flex-end;
}
.grow svg{
    margin-left: -5px;
}
.shrink svg{
    margin: 0 0 9px 0;
}
.font-row2{
    display: flex;
    align-items: center;
    height: 24px;
    margin-top: 7px;
    padding-left: 6px;
}
.fmt{
    width: 22px;
    text-align: center;
    color: #222;
}
.f-b{
    font-weight: 700;
}
.f-i{
    font-style: italic;
}
.f-u{
    margin-left: 3px;
    text-decoration: underline;
}
.vsep{
    width: 1px;
    height: 20px;
    background: #d0d3d8;
}
.d1{
    margin-left: 1px;
}
.s1{
    margin-left: 6px;
}
.i-border{
    margin-left: 9px;
}
.d2{
    margin-left: 4px;
}
.s2{
    margin-left: 8px;
}
.i-fill,.i-color{
    width: 16px;
    display: flex;
    flex-direction: column;
    align-items: center;
    line-height: 13px;
    color: #222;
}
.i-fill{
    margin-left: 8px;
}
.i-color{
    margin-left: 7px;
    text-decoration: underline;
}
.bar{
    display: block;
    width: 16px;
    height: 4px;
    margin-top: 1px;
}
.bar.yellow{
    background: #ffff00;
}
.bar.red{
    background: #ff0000;
}
.d3{
    margin-left: 3px;
}
.s3{
    margin-left: 7px;
}
.i-phon{
    margin-left: 9px;
    width: 15px;
    display: flex;
    flex-direction: column;
    align-items: center;
    font-size: 8px;
    line-height: 9px;
    color: #222;
    white-space: nowrap;
}
.d4{
    margin-left: 4px;
}

.align-grid{
    display: grid;
    grid-template-columns: 23px 24px 23px 1fr;
    grid-auto-rows: 22.500px;
    padding: 4px 0 0 5px;
    align-items: center;
    justify-items: center;
}
.atool{
    width: 100%;
    height: 100%;
    display: flex;
    align-items: center;
    justify-content: center;
}
.atool.on{
    background: linear-gradient(to bottom, #fde9a8, #fbd36f);
    border: 1px solid #c59a45;
    border-radius: 2px;
}
.lines{
    display: block;
}
.lines path{
    stroke: #222;
    fill: none;
}
.lines path.blue{
    stroke: #2a66b8;
    fill: #2a66b8;
}
.awide{
    display: flex;
    align-items: center;
    gap: 3px;
    justify-self: start;
    margin-left: 4px;
}
.aorient{
    grid-column: 3 / span 2;
    justify-self: start;
    margin-left: 11px;
    padding-left: 0;
}
.g-num .group-body{
    padding: 3px 0 0 4px;
}
.c-num{
    width: 80px;
    font-size: 13px;
}
.num-row{
    display: flex;
    align-items: center;
    height: 24px;
    margin-top: 0;
    padding-left: 4px;
}
.num-row .dd{
    margin-left: 4px;
}
.pct{
    margin-left: 11px;
    font: 13px "Liberation Sans", sans-serif;
    color: #222;
}
.comma{
    margin-left: 15px;
    font: bold 14px "Liberation Sans", sans-serif;
    color: #222;
}
.dec-row{
    display: flex;
    padding-left: 4px;
    margin-top: 1px;
    gap: 6px;
}
.dec{
    position: relative;
    width: 16px;
    font: bold 8.500px/9px "Liberation Sans", sans-serif;
    color: #333;
    text-align: right;
}
.dec svg{
    position: absolute;
    left: 0;
    top: 2px;
}
.stack{
    display: flex;
    flex-direction: column;
    gap: 4px;
    padding: 2px 0 0 8px;
}
.cmd{
    height: 18px;
    display: flex;
    align-items: center;
    gap: 4px;
    white-space: nowrap;
}
.cmd .dd{
    margin-left: 3px;
}
.edit-body{
    display: flex;
}
.edit-small{
    width: 42px;
    padding: 3px 0 0 9px;
    display: flex;
    flex-direction: column;
    gap: 5px;
}
.etool{
    height: 18px;
    display: flex;
    align-items: center;
    gap: 3px;
}
.sigma{
    width: 14px;
    font: bold 15px "Liberation Serif", serif;
    color: #111;
    text-align: center;
}
.big-cmd{
    width: 44px;
    display: flex;
    flex-direction: column;
    align-items: center;
    padding-top: 6px;
    white-space: nowrap;
    line-height: 15px;
    word-spacing: 1px;
}
.big-cmd svg{
    margin-bottom: 2px;
}
.b-sort{
    margin-left: -5px;
}

/* formula bar */
.formula{
    height: 23px;
    margin-top: 3px;
    display: flex;
    flex: none;
    border-bottom: 1px solid #b4b8be;
}
.namebox{
    width: 176px;
    margin-left: 1px;
    border-left: 1px solid #b4b8be;
    display: flex;
    align-items: center;
}
.name-val{
    font: 15px "Open Sans", sans-serif;
    color: #222;
    margin-left: 70px;
    width: 92px;
}
.fx-wrap{
    width: 94px;
    height: 22px;
    display: flex;
    align-items: center;
    background: linear-gradient(to bottom, #f4f5f6, #e4e5e7);
    border: 1px solid #c0c3c8;
    border-right: 1px solid #999;
    border-radius: 11px 0 0 11px;
}
.fx-dot{
    width: 9px;
    height: 9px;
    border-radius: 50%;
    background: #cfd1d4;
    margin-left: 5px;
}
.fx{
    margin-left: 60px;
    font: italic bold 14px "Liberation Serif", serif;
    color: #333;
}
.formula-text{
    width: 575px;
    padding-left: 11px;
    font: 14px/22px "Open Sans", sans-serif;
    color: #333;
}
.expand{
    width: 16px;
    display: flex;
    align-items: center;
    justify-content: center;
    background: #dfe2e7;
    border: 1px solid #bcc0c6;
}
.formula-gap{
    height: 4px;
    background: #fff;
    flex: none;
}

/* sheet */
.sheet{
    height: 425px;
    display: flex;
    flex: none;
}
.sheet-main{
    width: 845px;
    display: flex;
    flex-direction: column;
    border-top: 1px solid #aeb2b8;
}
.colheads{
    height: 9px;
    display: flex;
    background: #e3e6ea;
    flex: none;
}
.corner{
    width: 13px;
    border-right: 1px solid #b8bcc2;
}
.ch{
    width: 29px;
    font: 6.500px/9px "Liberation Sans", sans-serif;
    text-align: center;
    color: #667;
    border-right: 1px solid #b8bcc2;
    flex: none;
}
.ch.w{
    width: 38px;
}
.ch.cur{
    background: #f8d88c;
    color: #555;
    border: 1px solid #c28a30;
    border-width: 0 1px;
}
.sheet-body{
    height: 416px;
    display: flex;
    overflow: hidden;
}
.rowheads{
    width: 13px;
    display: flex;
    flex-direction: column;
    background: #e3e6ea;
    border-right: 1px solid #b8bcc2;
    flex: none;
}
.rowheads span{
    height: 9px;
    font: 6.500px/8px "Liberation Sans", sans-serif;
    text-align: center;
    color: #667;
    border-bottom: 1px solid #c8ccd2;
    flex: none;
}
.rowheads span.cur{
    background: #f8d88c;
    color: #555;
}
.cells{
    flex: 1;
    display: grid;
    grid-template-columns: repeat(6, 29px) repeat(15, 38px) repeat(3, 29px);
    grid-auto-rows: 9px;
    overflow: hidden;
    background: #fff;
}

.lead{
    grid-column: 2 / 5;
    border-bottom: 2px solid #000;
    margin: 0 -1px -1px -1px;
    font: 6px/7px "Liberation Sans", sans-serif;
    color: #555;
    text-align: center;
    height: 10px;
}
.lead-text{
    display: block;
}
.lead.sel{
    border-bottom: 0;
    display: flex;
    align-items: flex-end;
}
.line{
    flex: 1;
    height: 2px;
    background: #000;
}
.cur-cell{
    position: relative;
    width: 32px;
    height: 11px;
    margin-top: -1px;
    border: 2px solid #000;
    border-bottom: 0;
    background: #fff;
    flex: none;
}
.handle{
    position: absolute;
    right: -3px;
    bottom: -1px;
    width: 6px;
    height: 5px;
    border: 1px solid #000;
    border-radius: 2px;
    background: #fff;
}
.r4{
    grid-row: 4;
}
.r13{
    grid-row: 13;
}
.r24{
    grid-row: 24;
}
.r37{
    grid-row: 37;
}

.map{
    border-collapse: collapse;
    table-layout: fixed;
    border: 2px solid #000;
    grid-column: 5 / 25;
    align-self: start;
    margin: -2px 0 0 -2px;
    font: 6.200px "Liberation Sans", sans-serif;
    color: #222;
    background: #fff;
}
.map col{
    width: 38px;
}
.map col.side{
    width: 29px;
}
.map td{
    height: 9px;
    padding: 0;
    line-height: 7px;
    text-align: center;
    white-space: nowrap;
    overflow: hidden;
    border: 1px solid #000;
}
.map-a{
    grid-row: 3 / span 6;
    width: 628px;
}
.map-b{
    grid-row: 12 / span 8;
    width: 438px;
}
.map-c{
    grid-row: 23 / span 10;
    width: 362px;
}
.map-d{
    grid-row: 36 / span 12;
    width: 286px;
}
.map .chip{
    background: #ffa6c9;
    font-weight: 700;
    color: #333;
}
.map .title{
    background: #d8e4bc;
    font-weight: 700;
}
.map .heads td{
    background: #d8e4bc;
    color: #222;
}
.map .grp{
    background: #c5d9f1;
    font-weight: 700;
    color: #333;
    border-right: 0;
}
.map .lab{
    background: #c5d9f1;
    border-left: 0;
}
.g{
    background: #32cd32;
}
.p{
    background: #ffb6c1;
}
.t{
    background: #40e0d0;
}
.y{
    background: #ffffcc;
}
.n{
    background: linear-gradient(135deg, #0e7a0e 4px, #d3d3d3 4px);
}

/* vertical scrollbar */
.vscroll{
    width: 16px;
    margin-left: 1px;
    display: flex;
    flex-direction: column;
    background: #e3e6ea;
    flex: none;
}
.v-split{
    height: 8px;
    margin: 1px 1px 0;
    background: #fff;
    border: 1px solid #9aa0a8;
    flex: none;
}
.v-btn{
    height: 16px;
    display: flex;
    align-items: center;
    justify-content: center;
    flex: none;
}
.v-thumb{
    height: 206px;
    margin: 0 1px;
    background: linear-gradient(to right, #eef0f3, #d6dae0);
    border: 1px solid #9aa0a8;
    border-radius: 2px;
    flex: none;
}
.v-fill{
    flex: 1;
}

/* sheet tabs and horizontal scrollbar */
.sheetbar{
    height: 16px;
    display: flex;
    align-items: center;
    background: #e6e9ed;
    border-top: 1px solid #b4b8be;
    flex: none;
}
.nav-btns{
    width: 64px;
    display: flex;
    justify-content: space-between;
    align-items: center;
    padding: 0 8px 0 7px;
    flex: none;
    border-right: 1px solid #aaa;
    height: 15px;
}
.sheet-tabs{
    width: 442px;
    height: 15px;
    display: flex;
    font: 14px/15px "Open Sans", sans-serif;
    color: #777;
    white-space: nowrap;
    flex: none;
}
.st{
    padding: 0 4px 0 2px;
    flex: none;
}
.st.on{
    width: 68px;
    padding-left: 8px;
    background: #fff;
    color: #444;
}
.slant{
    flex: none;
    margin-left: -2px;
}
.h-split{
    width: 9px;
    height: 15px;
    background: #fff;
    border: 1px solid #9aa0a8;
    margin-left: 1px;
    flex: none;
}
.hscroll{
    flex: 1;
    display: flex;
    align-items: center;
    justify-content: space-between;
    padding: 0 5px;
}
.h-thumb{
    width: 275px;
    height: 15px;
    display: flex;
    align-items: center;
    justify-content: center;
    background: linear-gradient(to bottom, #eef0f3, #d6dae0);
    border: 1px solid #9aa0a8;
    border-radius: 2px;
    margin: 0 auto 0 3px;
}
.hscroll > svg:last-child{
    margin-right: 1px;
}
.h-split.right{
    width: 7px;
    margin: 0 17px 0 0;
}

/* status bar */
.status{
    flex: 1;
    display: flex;
    align-items: center;
    background: linear-gradient(to bottom, #dfe2e6, #b9bec5);
    font-size: 12.500px;
    color: #555;
}
.ready{
    margin-left: 9px;
    width: 33px;
}
.st-sep{
    width: 1px;
    height: 100%;
    background: #9da2a9;
}
.macro{
    margin: 0 9px;
    flex: none;
}
.st-right{
    flex: 1;
    display: flex;
    align-items: center;
    padding-left: 532px;
}
.view{
    width: 18px;
    height: 18px;
    display: flex;
    align-items: center;
    justify-content: center;
}
.view.on{
    background: linear-gradient(to bottom, #fde9a8, #fbd36f);
    border: 1px solid #d09a3a;
    border-radius: 2px;
}
.zoom-val{
    margin: 0 14px 0 12px;
    font: 13px "Open Sans", sans-serif;
    color: #555;
}
.round{
    width: 16px;
    height: 16px;
    border-radius: 50%;
    border: 1px solid #777;
    background: linear-gradient(to bottom, #fff, #d8dadd);
    font: bold 15px/13px "Liberation Sans", sans-serif;
    text-align: center;
    color: #444;
    flex: none;
}
.slider{
    position: relative;
    width: 100px;
    height: 1px;
    background: #8a8f96;
}
.slider-thumb{
    position: absolute;
    left: 16px;
    top: -6px;
    width: 9px;
    height: 11px;
    background: #f2f3f5;
    border: 1px solid #777;
    border-radius: 2px 2px 4px 4px;
}
.slider-tick{
    position: absolute;
    left: 49px;
    top: -3px;
    width: 1px;
    height: 7px;
    background: #9aa0a8;
}
.grip{
    margin-left: 11px;
}
```
